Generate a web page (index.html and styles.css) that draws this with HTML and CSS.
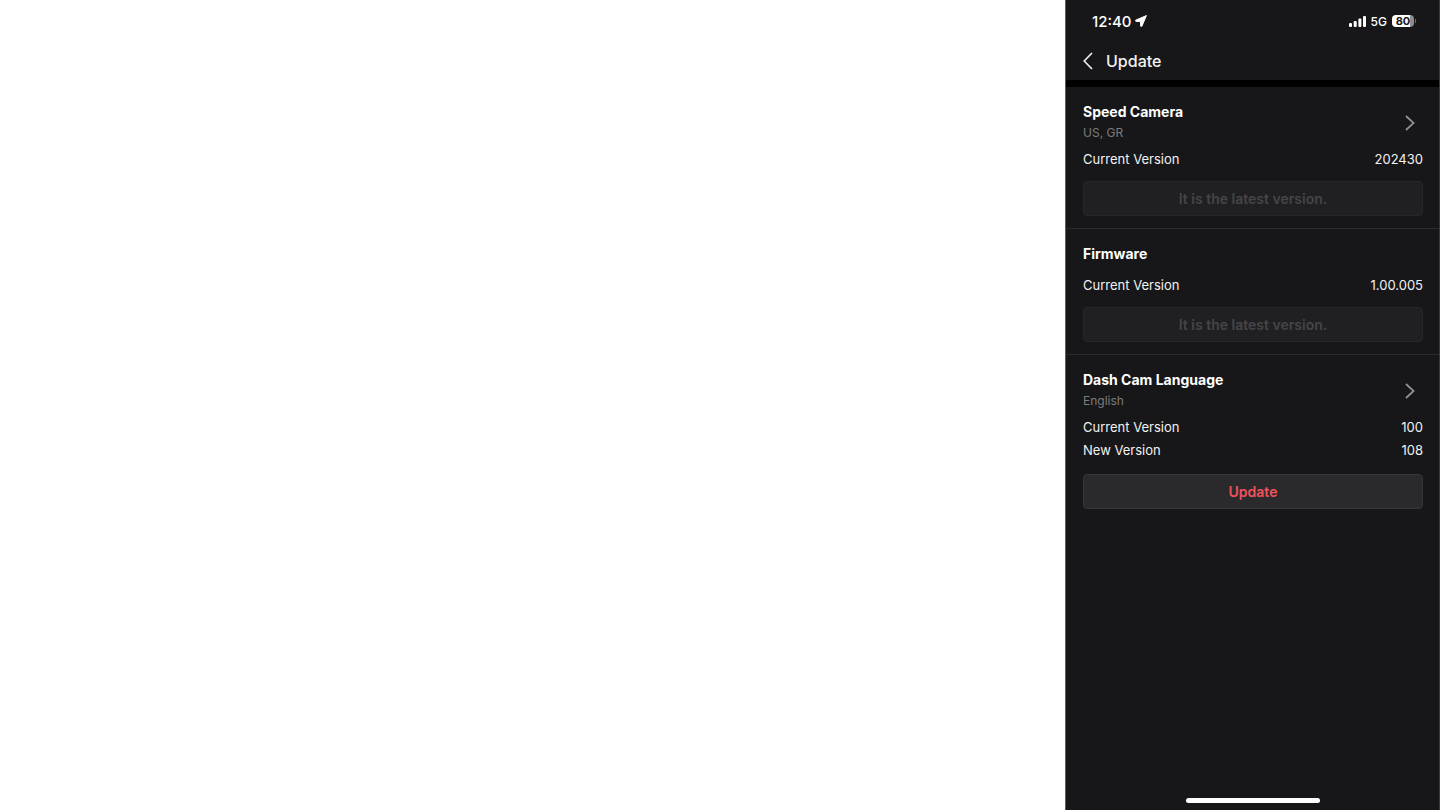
FILE: index.html
```html
<!DOCTYPE html>
<html lang="en">
  <head>
    <meta charset="UTF-8" />
    <meta name="viewport" content="width=device-width, initial-scale=1.0" />
    <title>Update</title>
    <link rel="stylesheet" href="styles.css">
  </head>
  <body>
    <div class="phone">
      <div class="status-bar">
        <div class="time">
          <span>12:40</span>
          <svg width="12" height="12" viewBox="0 0 12 12" aria-hidden="true">
            <path d="M11.4 .6 L.6 5.2 Q.2 5.8 .8 6.3 L5.4 6.6 L5.7 11.2 Q6.2 11.8 6.8 11.4 Z" fill="#fff" stroke="#fff" stroke-width="1" stroke-linejoin="round" />
          </svg>
        </div>
        <div class="indicators">
          <svg width="17" height="11" viewBox="0 0 17 11" aria-hidden="true">
            <g fill="#fff">
              <rect x="0" y="7" width="3" height="4" rx="1" />
              <rect x="4.7" y="5" width="3" height="6" rx="1" />
              <rect x="9.4" y="2.5" width="3" height="8.5" rx="1" />
              <rect x="14" y="0" width="3" height="11" rx="1" />
            </g>
          </svg>
          <span class="network">5G</span>
          <span class="battery"><span class="battery-level">80</span></span>
        </div>
      </div>

      <header class="nav">
        <button class="back" aria-label="Back">
          <svg width="11" height="18" viewBox="0 0 11 18" aria-hidden="true">
            <path d="M10 1 L2.2 9 L10 17" fill="none" stroke="#f2f2f2" stroke-width="1.6" />
          </svg>
        </button>
        <h1>Update</h1>
      </header>

      <main>
        <section>
          <a class="head" href="#speed-camera">
            <span>
              <span class="title">Speed Camera</span>
              <span class="sub">US, GR</span>
            </span>
            <svg width="10" height="16" viewBox="0 0 10 16" aria-hidden="true">
              <path d="M1 1 L8.6 8 L1 15" fill="none" stroke="#929294" stroke-width="1.7" />
            </svg>
          </a>
          <dl>
            <div class="row"><dt>Current Version</dt><dd>202430</dd></div>
          </dl>
          <button class="btn" disabled>It is the latest version.</button>
        </section>

        <section>
          <h2 class="title">Firmware</h2>
          <dl class="spaced">
            <div class="row"><dt>Current Version</dt><dd>1.00.005</dd></div>
          </dl>
          <button class="btn" disabled>It is the latest version.</button>
        </section>

        <section>
          <a class="head" href="#language">
            <span>
              <span class="title">Dash Cam Language</span>
              <span class="sub">English</span>
            </span>
            <svg width="10" height="16" viewBox="0 0 10 16" aria-hidden="true">
              <path d="M1 1 L8.6 8 L1 15" fill="none" stroke="#929294" stroke-width="1.7" />
            </svg>
          </a>
          <dl>
            <div class="row"><dt>Current Version</dt><dd>100</dd></div>
            <div class="row"><dt>New Version</dt><dd>108</dd></div>
          </dl>
          <button class="btn btn-update">Update</button>
        </section>
      </main>

      <div class="home-bar"></div>
    </div>
  </body>
</html>
```
FILE: styles.css
```css
* {
  box-sizing: border-box;
}
body {
  display: flex;
  justify-content: flex-end;
  min-height: 100vh;
  margin: 0;
  background: #fff;
  font-family: Inter, "Liberation Sans", sans-serif;
}
.phone {
  display: flex;
  flex-direction: column;
  width: 100%;
  max-width: 375px;
  background: #171719;
  border-left: 1px solid #5c5c5e;
  border-right: 1px solid #3a3a3c;
  color: #f2f2f2;
}
.status-bar {
  display: flex;
  justify-content: space-between;
  align-items: center;
  height: 42px;
  padding: 0 23px 0 26px;
  color: #fff;
}
.time {
  display: flex;
  align-items: center;
  gap: 3px;
  font-size: 15px;
  font-weight: 500;
}
.indicators {
  display: flex;
  align-items: center;
  gap: 5px;
}
.network {
  font-size: 12px;
  font-weight: 500;
}
.battery {
  display: flex;
  align-items: center;
}
.battery-level {
  width: 22px;
  border-radius: 4px;
  background: linear-gradient(to right, #fff 80%, #8e8e90 80%);
  color: #171719;
  font-size: 11px;
  font-weight: 700;
  line-height: 12px;
  text-align: center;
}
.battery::after {
  content: "";
  width: 1px;
  height: 4px;
  margin-left: 1px;
  background: #6c6c6e;
}
.nav {
  display: flex;
  align-items: center;
  gap: 13px;
  height: 45px;
  padding: 0 16px;
  border-bottom: 7px solid #000;
}
.back {
  display: flex;
  padding: 0;
  border: none;
  background: none;
  cursor: pointer;
}
h1 {
  margin: 0;
  font-size: 16px;
  font-weight: 500;
}
section {
  padding: 15px 16px 12px 17px;
  border-bottom: 1px solid #2c2c2e;
}
section:last-child {
  border-bottom: none;
}
.head {
  display: flex;
  justify-content: space-between;
  align-items: center;
  padding-right: 8px;
  color: inherit;
  text-decoration: none;
}
.title {
  display: block;
  margin: 0;
  color: #fff;
  font-size: 14px;
  font-weight: 700;
  line-height: 20px;
}
.sub {
  display: block;
  color: #7c7c7e;
  font-size: 12px;
  line-height: 22px;
}
dl {
  margin: 4px 0 10px;
}
.spaced {
  margin-top: 10px;
}
.row {
  display: flex;
  justify-content: space-between;
  font-size: 13px;
  line-height: 23px;
}
dd {
  margin: 0;
}
.btn {
  width: 100%;
  height: 35px;
  border: 1px solid #272729;
  border-radius: 4px;
  background: #202022;
  color: #454547;
  font-family: inherit;
  font-size: 14px;
  font-weight: 600;
}
.btn-update {
  margin-top: 2px;
  border-color: #363638;
  background: #2a2a2c;
  color: #f0525c;
  cursor: pointer;
}
.home-bar {
  align-self: center;
  width: 134px;
  height: 5px;
  margin-top: auto;
  margin-bottom: 7px;
  border-radius: 3px;
  background: #fff;
}
```
